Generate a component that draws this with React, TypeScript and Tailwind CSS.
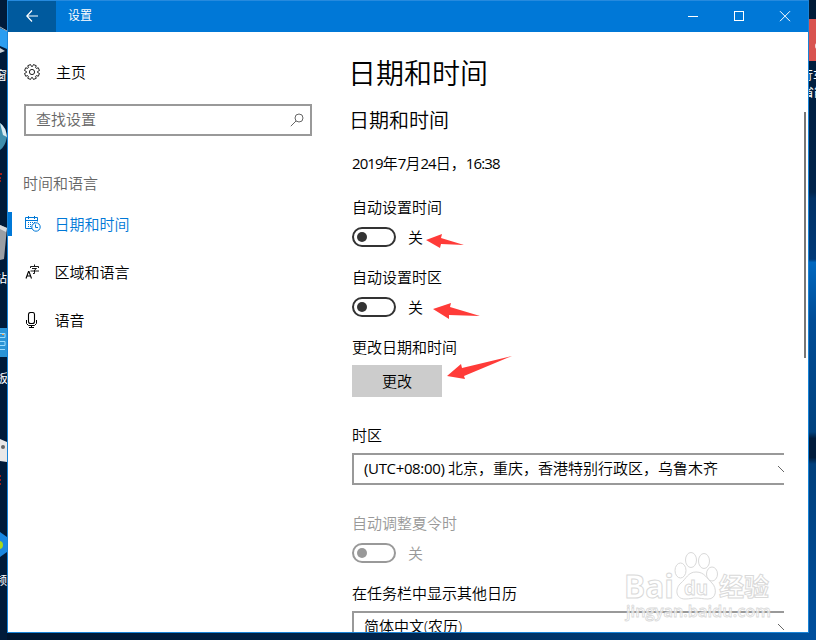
import React from "react";

interface NavItem {
  id: string;
  label: string;
  icon: React.ReactNode;
  active?: boolean;
}

const CalendarIcon: React.FC = () => (
  <svg width="16" height="16" viewBox="0 0 16 16" fill="none" stroke="#0078d7">
    <path d="M7 12.5H.5v-11h12v4M.5 4.5h12M3.5 0v3M9.5 0v3" />
    <path d="M3 6.5h8M3 8.5h4M3 10.5h3" strokeDasharray="1 1" />
    <circle cx="11" cy="11" r="4.2" />
    <path d="M10.5 8.5v3H13" />
  </svg>
);

const LanguageIcon: React.FC = () => (
  <svg width="16" height="16" viewBox="0 0 16 16" fill="none" stroke="#000">
    <path d="M1 14.5 3.5 7.5h.5l2.5 7M2 12h3.8" strokeWidth="1.1" />
    <path d="M9.5.5v1.5M5.5 4V2.5h8V4M7 4.500h4.500L9.500 6V9.500H8M5.500 7h8.500" strokeWidth=".9" />
  </svg>
);

const MicIcon: React.FC = () => (
  <svg width="16" height="16" viewBox="0 0 16 16" fill="none" stroke="#000">
    <rect x="3.5" y=".5" width="6" height="11" rx="2" strokeWidth="1.1" />
    <path d="M1.5 8v3.5l2 2h6l2-2V8M6.5 13.5v2M4 15.5h5" strokeWidth="1" />
  </svg>
);

const GearIcon: React.FC = () => {
  const points: string[] = [];
  for (let i = 0; i < 8; i++) {
    [
      [-0.3, 5.6],
      [-0.2, 7.6],
      [0.2, 7.6],
      [0.3, 5.6],
    ].forEach(([offset, r]) => {
      const a = (i * Math.PI) / 4 + Math.PI / 8 + offset;
      points.push(`${(8 + r * Math.cos(a)).toFixed(2)},${(8 + r * Math.sin(a)).toFixed(2)}`);
    });
  }
  return (
    <svg width="16" height="16" viewBox="0 0 16 16" fill="none" stroke="#222">
      <polygon points={points.join(" ")} strokeLinejoin="round" />
      <circle cx="8" cy="8" r="2.6" />
    </svg>
  );
};

const navItems: NavItem[] = [
  { id: "date", label: "日期和时间", icon: <CalendarIcon />, active: true },
  { id: "region", label: "区域和语言", icon: <LanguageIcon /> },
  { id: "speech", label: "语音", icon: <MicIcon /> },
];

const Label: React.FC<{ children: React.ReactNode; className: string }> = ({
  children,
  className,
}) => (
  <div className={`flex h-5 shrink-0 items-center whitespace-nowrap leading-5 ${className}`}>
    {children}
  </div>
);

const Toggle: React.FC<{ disabled?: boolean }> = ({ disabled }) => (
  <div
    className={`mt-2.5 flex h-5 shrink-0 items-center ${disabled ? "text-[#999]" : "text-black"}`}
  >
    <div
      className={`flex h-5 w-11 items-center rounded-full border-2 pl-[3px] ${
        disabled ? "border-[#999]" : "border-[#333]"
      }`}
    >
      <div className={`size-2.5 rounded-full ${disabled ? "bg-[#999]" : "bg-[#333]"}`} />
    </div>
    <span className="ml-3 leading-5">关</span>
  </div>
);

const Select: React.FC<{ children: React.ReactNode }> = ({ children }) => (
  <div className="mt-2 flex h-8 shrink-0 items-center justify-between border-2 border-r-0 border-[#999] pl-2.5">
    <span className="-mt-0.5 whitespace-nowrap leading-5">{children}</span>
    <svg width="6" height="8" viewBox="0 0 6 8" fill="none" stroke="#666">
      <path d="M0 1l7 7" />
    </svg>
  </div>
);

const TitleBar: React.FC = () => (
  <div className="flex h-8 shrink-0 border-t border-[#268ade] bg-[#0078d7] text-white">
    <div className="flex w-12 items-center justify-center bg-[#005a9e]">
      <svg
        width="12"
        height="12"
        viewBox="0 0 12 12"
        fill="none"
        stroke="#fff"
        strokeWidth="1.2"
        className="-mt-px"
      >
        <path d="M6 .5.8 6 6 11.5M.8 6H12" />
      </svg>
    </div>
    <span className="ml-3 flex-1 pt-[5px] text-xs leading-5">设置</span>
    <svg width="140" height="31" viewBox="0 0 140 31" fill="none" stroke="#fff">
      <path d="M20 15.5h10" />
      <rect x="66.5" y="10.5" width="9" height="9" />
      <path d="m112 10.2 10 10m0-10-10 10" />
    </svg>
  </div>
);

const Sidebar: React.FC = () => (
  <div className="flex w-[304px] shrink-0 flex-col">
    <div className="mt-5 flex h-10 items-center pl-4">
      <GearIcon />
      <span className="ml-4">主页</span>
    </div>
    <div className="ml-4 mt-3 flex h-8 items-center justify-between border-2 border-[#999] pl-2.5 pr-1.5 text-[#666]">
      <span className="-mt-0.5">查找设置</span>
      <svg width="14" height="14" viewBox="0 0 14 14" fill="none" stroke="#666">
        <circle cx="9" cy="5" r="4" />
        <path d="M6 8 .8 13.2" />
      </svg>
    </div>
    <div className="mt-9 flex h-[22px] items-center pl-[15px] text-[#666]">时间和语言</div>
    <div className="mt-1.5">
      {navItems.map((item) => (
        <div
          key={item.id}
          className={`flex h-12 items-center ${item.active ? "text-[#0078d7]" : "text-black"}`}
        >
          <div className={`h-6 w-1 ${item.active ? "bg-[#0078d7]" : ""}`} />
          <div className="ml-[13px]">{item.icon}</div>
          <span className="ml-[13.5px]">{item.label}</span>
        </div>
      ))}
    </div>
  </div>
);

const Content: React.FC = () => (
  <div className="ml-9 flex w-[436px] shrink-0 flex-col overflow-hidden pl-1">
    <h1 className="-ml-1 mt-[21px] flex h-10 shrink-0 items-center text-[28px]">日期和时间</h1>
    <h2 className="-ml-[3px] mt-[13px] flex h-[30px] shrink-0 items-center text-xl">日期和时间</h2>
    <Label className="mt-[17px] font-normal tracking-[-0.9px]">
      2019<span className="font-[350] tracking-normal">年</span>7
      <span className="font-[350] tracking-normal">月</span>24
      <span className="font-[350] tracking-normal">日，</span>16:38
    </Label>
    <Label className="mt-6">自动设置时间</Label>
    <Toggle />
    <Label className="mt-5">自动设置时区</Label>
    <Toggle />
    <Label className="mt-5">更改日期和时间</Label>
    <button className="mt-2 h-8 w-[90px] shrink-0 bg-[#ccc]">更改</button>
    <Label className="mt-7">时区</Label>
    <Select>
      <span className="font-normal tracking-[-0.35px]">(UTC+08:00) </span>
      北京，重庆，香港特别行政区，乌鲁木齐
    </Select>
    <Label className="mt-7 text-[#999]">自动调整夏令时</Label>
    <Toggle disabled />
    <Label className="mt-5">在任务栏中显示其他日历</Label>
    <Select>简体中文(农历)</Select>
  </div>
);

// Red pointers drawn over the settings
const Arrows: React.FC = () => (
  <svg className="absolute left-0 top-0" width="816" height="640" fill="#ff3b38">
    <path d="M426 240 442 234 441 238 464 245 441 244 440 248Z" />
    <path d="M433 309 451 303 450 307 480 316 449 315 449 319Z" />
    <path d="M447 376 461 364 462 368 512 356 464 376 465 379Z" />
  </svg>
);

const Watermark: React.FC = () => (
  <svg
    className="absolute left-[620px] top-[546px]"
    width="160"
    height="84"
    fill="#fff"
    fillOpacity=".7"
    stroke="#d9d9d9"
    fontFamily="'Open Sans', 'Noto Sans CJK SC', sans-serif"
    fontWeight="700"
  >
    <text x="4" y="52" fontSize="33" textLength="50" lengthAdjust="spacingAndGlyphs">Bai</text>
    <ellipse cx="60.5" cy="24.5" rx="5.5" ry="7.5" />
    <ellipse cx="71" cy="14" rx="5.5" ry="7.5" />
    <ellipse cx="84" cy="15" rx="5.5" ry="7.5" />
    <ellipse cx="92" cy="28" rx="5.5" ry="7" />
    <path d="M76 26c-8 0-10 7-15 11-6 5-6 16 4 16 5 0 7-1 11-1s7 1 12 1c9 0 9-11 4-16C87 33 85 26 76 26Z" />
    <text x="64" y="49" fontSize="20" textLength="24" lengthAdjust="spacingAndGlyphs">du</text>
    <text x="99" y="50" fontSize="25" textLength="50">经验</text>
    <text
      x="6"
      y="71"
      fontSize="17"
      textLength="145"
      lengthAdjust="spacingAndGlyphs"
      fontWeight="600"
      strokeWidth=".8"
    >
      jingyan.baidu.com
    </text>
  </svg>
);

const DesktopLeft: React.FC = () => (
  <svg
    width="7"
    height="640"
    className="shrink-0"
    fontFamily="'Noto Sans CJK SC', sans-serif"
    fontSize="12"
  >
    <rect width="7" height="640" fill="#001b3a" />
    <path d="M0 28 7 31V49L0 46Z" fill="#2b9df0" />
    <path d="M0 27 7 31" stroke="#a8b4bf" />
    <path d="M0 48 5 51 0 53Z" fill="#c9d0d6" />
    <text x="-5" y="80" fill="#fff">窗</text>
    <path d="M0 123q6 4 7 14-2 10-7 13Z" fill="#3f8fad" />
    <path d="M0 123q6 4 7 14l-4-2Z" fill="#d8eaf1" />
    <path d="M0 174h2M0 178h1M0 181h1" stroke="#a01d16" strokeWidth="2" />
    <path d="M0 225 7 228 4 259 0 260Z" fill="#9b9fa4" />
    <path d="M0 225 7 228 6 232 0 229Z" fill="#d8dadd" />
    <text x="-5" y="283" fill="#fff">站</text>
    <rect y="328" width="7" height="29" fill="#2b94d6" />
    <path d="M0 333.5h5v4H0M0 341.5h5v4H0M0 349.5h5" stroke="#9bdcff" fill="none" />
    <path d="M2 334.5h2" stroke="#ff9a3c" />
    <text x="-4" y="383" fill="#fff">板</text>
    <path d="M0 439 7 442V462L0 461Z" fill="#e8e8e8" />
    <circle cx="3" cy="447" r="2" fill="#666" />
    <path d="M0 476h1M0 480h1M0 484h1" stroke="#a01d16" strokeWidth="2" />
    <path d="M0 532 7 537V552L0 557Z" fill="#1987e0" />
    <circle cx="-1" cy="545" r="4" fill="#a6d91b" />
    <text x="-5" y="585" fill="#fff">频</text>
  </svg>
);

const DesktopRight: React.FC = () => (
  <svg
    width="7"
    height="640"
    className="shrink-0"
    fontFamily="'Noto Sans CJK SC', sans-serif"
    fontSize="12"
  >
    <defs>
      <linearGradient id="sky" x1="0" y1="0" x2="0" y2="1">
        <stop offset="0" stopColor="#001a36" />
        <stop offset=".3" stopColor="#00244c" />
        <stop offset=".31" stopColor="#003166" />
        <stop offset=".405" stopColor="#003a78" />
        <stop offset=".41" stopColor="#0068c0" />
        <stop offset=".5" stopColor="#004c96" />
        <stop offset=".675" stopColor="#00427f" />
        <stop offset=".685" stopColor="#001c3c" />
        <stop offset=".715" stopColor="#001c3c" />
        <stop offset=".725" stopColor="#00407c" />
        <stop offset="1" stopColor="#00509e" />
      </linearGradient>
    </defs>
    <rect width="7" height="640" fill="url(#sky)" />
    <rect y="19" width="7" height="42" fill="#d9534f" />
    <ellipse cx="8" cy="46" rx="2" ry="3" fill="#f4dcdc" />
    <text x="-8" y="80" fill="#fff">行车</text>
    <text x="-7" y="97" fill="#fff">省能</text>
  </svg>
);

const App: React.FC = () => {
  return (
    <div className="relative flex h-[640px] w-[816px] overflow-hidden bg-[#001b3a] font-['Open_Sans','Noto_Sans_CJK_SC',sans-serif] text-[15px] leading-5 text-black">
      <DesktopLeft />
      <div className="flex w-[802px] shrink-0 flex-col">
        <div className="flex h-[633px] shrink-0 flex-col border-x border-b border-[#1883d7] bg-white">
          <TitleBar />
          <div className="flex min-h-0 flex-1 font-[350]">
            <Sidebar />
            <Content />
            <div className="ml-5 mt-20 h-[246px] w-0.5 bg-[#777]" />
          </div>
        </div>
        <div className="flex-1 bg-linear-to-r from-[#001630] via-[#00264f] to-[#00509c]" />
      </div>
      <DesktopRight />
      <Arrows />
      <Watermark />
    </div>
  );
};

export default App;
